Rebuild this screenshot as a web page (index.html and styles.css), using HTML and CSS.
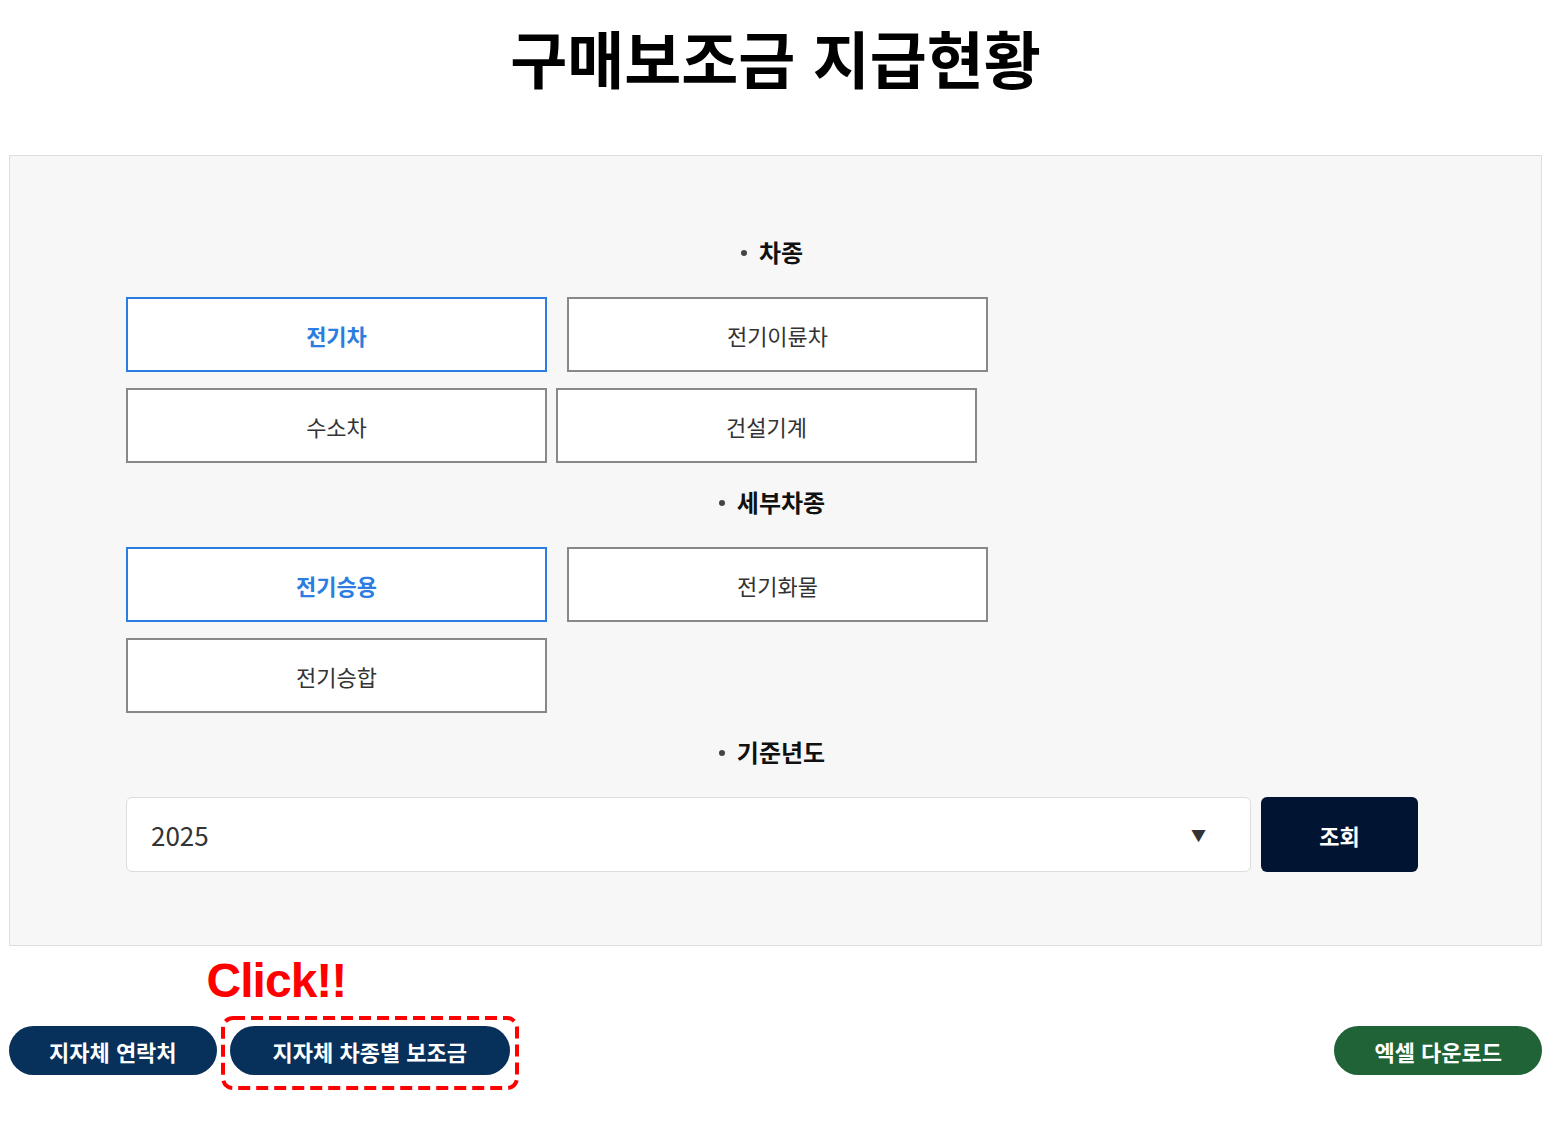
FILE: index.html
```html
<!DOCTYPE html>
<html lang="ko">
<head>
    <meta charset="UTF-8">
    <meta name="viewport" content="width=device-width, initial-scale=1.0">
    <title>구매보조금 지급현황</title>
    <link rel="stylesheet" href="styles.css">
</head>
<body>
    <div class="wrap">
        <h1 class="page-title">구매보조금 지급현황</h1>

        <section class="search-box">
            <h3 class="search-label">차종</h3>
            <div class="btn-row">
                <button class="opt-btn active">전기차</button>
                <button class="opt-btn">전기이륜차</button>
            </div>
            <div class="btn-row tight">
                <button class="opt-btn">수소차</button>
                <button class="opt-btn">건설기계</button>
            </div>

            <h3 class="search-label">세부차종</h3>
            <div class="btn-row">
                <button class="opt-btn active">전기승용</button>
                <button class="opt-btn">전기화물</button>
            </div>
            <div class="btn-row">
                <button class="opt-btn">전기승합</button>
            </div>

            <h3 class="search-label">기준년도</h3>
            <div class="year-row">
                <div class="year-select">
                    <span>2025</span>
                    <span class="arrow">&#9660;</span>
                </div>
                <button class="search-btn">조회</button>
            </div>
        </section>

        <div class="bottom-bar">
            <div class="left-btns">
                <button class="pill-btn">지자체 연락처</button>
                <span class="highlight">
                    <span class="click-note">Click!!</span>
                    <button class="pill-btn wide">지자체 차종별 보조금</button>
                    <svg class="dash-box" viewBox="0 0 298 74">
                        <rect x="2" y="2" width="294" height="70" rx="10" ry="10" fill="none" stroke="#f00" stroke-width="4" stroke-dasharray="12 6"/>
                    </svg>
                </span>
            </div>
            <button class="pill-btn excel">엑셀 다운로드</button>
        </div>
    </div>
</body>
</html>
```

FILE: styles.css
```css
body {
    margin: 0;
    padding: 0;
    background: #fff;
    color: #333;
    font-family: "Noto Sans CJK KR", "Noto Sans", sans-serif;
}

.wrap {
    width: 1533px;
    margin-left: 9px;
    padding-bottom: 40px;
}

.page-title {
    margin: 20px 0 61px;
    font-size: 62px;
    line-height: 74px;
    font-weight: 700;
    color: #000;
    text-align: center;
}

.search-box {
    background-color: #f7f7f7;
    border: 1px solid #dedede;
    padding: 79px 123px 73px 116px;
}

.search-label {
    margin: 22px 0 28px;
    font-size: 24px;
    line-height: 34px;
    font-weight: 700;
    color: #111;
    text-align: center;
}

.search-label:first-child {
    margin-top: 0;
}

.search-label::before {
    content: "";
    display: inline-block;
    width: 6px;
    height: 6px;
    margin: 0 12px 4px 0;
    border-radius: 50%;
    background-color: #444;
    vertical-align: middle;
}

.btn-row {
    display: flex;
    gap: 20px;
    margin-bottom: 16px;
}

.btn-row.tight {
    gap: 9px;
}

.opt-btn {
    box-sizing: border-box;
    width: 421px;
    height: 75px;
    border: 2px solid #888;
    background-color: #fff;
    color: #333;
    font-family: inherit;
    font-size: 22px;
    cursor: pointer;
}

.opt-btn.active {
    border-color: #2b7de1;
    color: #2b7de1;
    font-weight: 700;
}

.year-row {
    display: flex;
    gap: 10px;
}

.year-select {
    box-sizing: border-box;
    flex: 1;
    height: 75px;
    display: flex;
    align-items: center;
    justify-content: space-between;
    padding: 0 44px 0 24px;
    background-color: #fff;
    border: 1px solid #ddd;
    border-radius: 6px;
    font-size: 26px;
    color: #333;
}

.year-select .arrow {
    font-size: 15px;
    color: #333;
}

.search-btn {
    width: 157px;
    height: 75px;
    border: none;
    border-radius: 6px;
    background-color: #011533;
    color: #fff;
    font-family: inherit;
    font-size: 22px;
    font-weight: 700;
    cursor: pointer;
}

.bottom-bar {
    display: flex;
    justify-content: space-between;
    margin-top: 80px;
}

.left-btns {
    display: flex;
    gap: 13px;
}

.pill-btn {
    height: 49px;
    padding: 0 40px;
    border: none;
    border-radius: 25px;
    background-color: #07305a;
    color: #fff;
    font-family: inherit;
    font-size: 22px;
    font-weight: 700;
    cursor: pointer;
}

.pill-btn.wide {
    padding: 0 43px;
}

.pill-btn.excel {
    background-color: #1f6336;
}

/* 안내용 표시 */
.highlight {
    position: relative;
    display: inline-flex;
}

.dash-box {
    position: absolute;
    display: block;
    top: -10px;
    left: -9px;
    width: 298px;
    height: 74px;
    overflow: visible;
    pointer-events: none;
}

.click-note {
    position: absolute;
    left: -23px;
    top: -73px;
    font-family: "Liberation Sans", Arial, sans-serif;
    font-size: 48px;
    font-weight: 700;
    letter-spacing: -1px;
    line-height: 56px;
    color: #f00;
    white-space: nowrap;
}
```
